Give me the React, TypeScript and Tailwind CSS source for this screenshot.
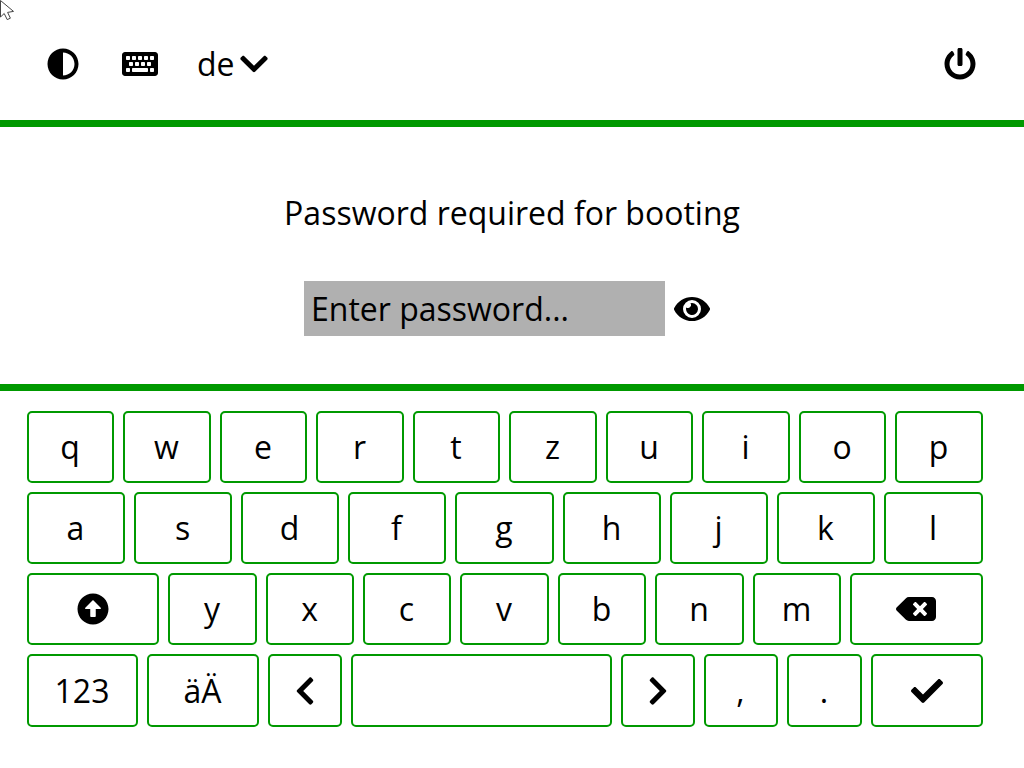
import type { ReactNode } from "react";
import {
  FaAdjust,
  FaArrowAltCircleUp,
  FaBackspace,
  FaCheck,
  FaChevronDown,
  FaChevronLeft,
  FaChevronRight,
  FaEye,
  FaKeyboard,
  FaPowerOff,
} from "react-icons/fa";

type KeyDef = { id: string; label: ReactNode };

const letters = (text: string): KeyDef[] =>
  text.split("").map((c) => ({ id: c, label: c }));

const rows: { cols: string; keys: KeyDef[] }[] = [
  {
    cols: "h-[72px] grid-cols-[87px_88px_87px_88px_87px_88px_87px_88px_87px_88px]",
    keys: letters("qwertzuiop"),
  },
  {
    cols: "h-[72px] grid-cols-[98px_98px_98px_98px_99px_98px_98px_98px_99px]",
    keys: letters("asdfghjkl"),
  },
  {
    cols: "h-[72px] grid-cols-[132px_89px_88px_88px_89px_88px_89px_88px_133px]",
    keys: [
      { id: "shift", label: <FaArrowAltCircleUp className="size-8" /> },
      ...letters("yxcvbnm"),
      { id: "backspace", label: <FaBackspace className="h-8 w-10" /> },
    ],
  },
  {
    cols: "h-[73px] grid-cols-[111px_112px_74px_261px_74px_74px_75px_112px]",
    keys: [
      { id: "numbers", label: "123" },
      { id: "umlauts", label: "äÄ" },
      { id: "left", label: <FaChevronLeft className="ml-px h-8 w-5" /> },
      { id: "space", label: "" },
      { id: "right", label: <FaChevronRight className="ml-px h-8 w-5" /> },
      { id: "comma", label: "," },
      { id: "period", label: "." },
      { id: "enter", label: <FaCheck className="ml-px size-8" /> },
    ],
  },
];

function Key({ children }: { children: ReactNode }) {
  return (
    <button
      type="button"
      className="flex items-center justify-center rounded-[5px] border-2 border-[#009900] bg-white pr-px"
    >
      {children}
    </button>
  );
}

export default function App() {
  return (
    <div className="relative flex h-[768px] w-[1024px] flex-col overflow-hidden bg-white font-['Open_Sans','Noto_Sans',sans-serif] text-[32px] leading-[44px] text-black">
      <header className="flex h-[127px] items-center border-b-[7px] border-[#009900] pt-2 pr-12 pl-[47px]">
        <FaAdjust className="size-8" />
        <FaKeyboard className="ml-[43px] h-8 w-9" />
        <div className="ml-[39px] flex items-center">
          <span className="w-[43px]">de</span>
          <FaChevronDown className="h-8 w-7" />
        </div>
        <FaPowerOff className="ml-auto size-8" />
      </header>

      <main className="flex h-[264px] flex-col items-center border-b-[7px] border-[#009900] pt-16">
        <h1 className="whitespace-nowrap">Password required for booting</h1>
        <div className="mt-[46px] flex items-center gap-[9px] pr-[10px]">
          <div className="flex h-[55px] w-[361px] items-center bg-[#b0b0b0] pl-[7px]">
            Enter password...
          </div>
          <FaEye className="h-8 w-9" />
        </div>
      </main>

      <section className="flex flex-col gap-[9px] pt-5 pl-[27px]">
        {rows.map((row) => (
          <div key={row.keys[0].id} className={`grid gap-x-[9px] ${row.cols}`}>
            {row.keys.map((k) => (
              <Key key={k.id}>{k.label}</Key>
            ))}
          </div>
        ))}
      </section>

      <svg className="absolute top-0 left-0" width="15" height="21" viewBox="0 0 15 21">
        <path
          d="M0.5 0.5V17L4.2 13.5L7.2 19.6L10.4 18.2L7.6 12.4L13.5 11.4Z"
          fill="#fff"
          stroke="#444"
          strokeWidth="1"
        />
      </svg>
    </div>
  );
}
